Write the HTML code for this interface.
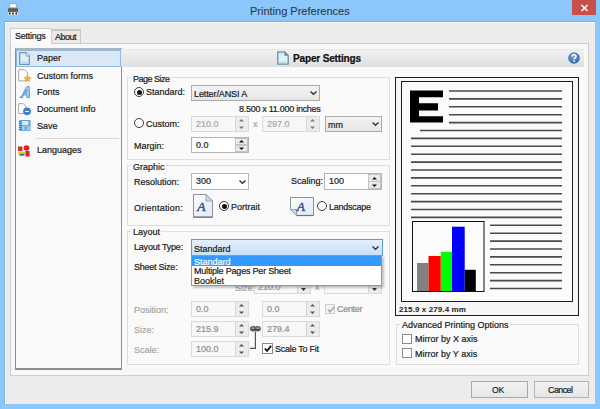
<!DOCTYPE html>
<html><head><meta charset="utf-8">
<style>
*{margin:0;padding:0;box-sizing:border-box}
html,body{width:600px;height:409px;overflow:hidden}
body{position:relative;background:#8bc7fa;font-family:"Liberation Sans",sans-serif;font-size:9px;color:#1a1a1a;-webkit-text-stroke:0.2px currentColor}
.a{position:absolute}
.t{position:absolute;white-space:nowrap;line-height:10px}
.grp{position:absolute;border:1px solid #dedede}
.lbl{position:absolute;white-space:nowrap;line-height:10px;background:#fafafa;padding:0 1px 0 2px}
.combo{position:absolute;border:1px solid #acacac;background:linear-gradient(#f3f3f3,#e6e6e6)}
.spin{position:absolute;border:1px solid #b4b4b4;background:#fff}
.spin.dis{border-color:#dadada;background:#f7f7f7}
.radio{position:absolute;width:10px;height:10px;border-radius:50%;border:1px solid #3a3a3a;background:#fff}
.radio.on::after{content:"";position:absolute;left:1.5px;top:1.5px;width:5px;height:5px;border-radius:50%;background:#111}
.chk{position:absolute;width:11px;height:11px;border:1px solid #8a8a8a;background:#fff}
.dis{color:#a6a6a6}
svg{position:absolute;overflow:visible}
.tex{background:repeating-conic-gradient(#e5e5e5 0 25%,#f3f3f3 0 50%) 0 0/2px 2px}
</style></head><body>
<!-- title bar -->
<div class="t" style="left:250px;top:5px;font-size:11px;line-height:12px;color:#2a3a4c;-webkit-text-stroke:0.1px currentColor">Printing Preferences</div>
<div class="a" style="left:572px;top:0;width:24px;height:15px;background:#c7504b"></div>
<svg style="left:581px;top:5px" width="7" height="6" viewBox="0 0 7 6"><path d="M0.5 0L6.5 6M6.5 0L0.5 6" stroke="#fff" stroke-width="1.5"/></svg>
<svg style="left:7px;top:3px" width="12" height="14" viewBox="0 0 12 14"><rect x="2.8" y="0.8" width="6.4" height="4" fill="#fff" stroke="#8a8a8a" stroke-width="0.6"/><rect x="0.5" y="4.8" width="11" height="4.6" rx="1" fill="#5b5b5b" stroke="#ddd" stroke-width="0.6"/><rect x="1.5" y="9.4" width="9" height="2.6" fill="#fff"/><rect x="2" y="9.6" width="1.6" height="1.8" fill="#111"/><rect x="5.2" y="9.6" width="1.6" height="2" fill="#111"/><rect x="8.4" y="9.6" width="1.6" height="1.8" fill="#111"/></svg>

<!-- client -->
<div class="a tex" style="left:4px;top:21px;width:591px;height:383px;border-top:1px solid #7fb3e0;border-left:1px solid #7fb3e0"></div><div class="a" style="left:5px;top:22px;width:590px;height:1px;background:#fafafa"></div><div class="a" style="left:5px;top:22px;width:1px;height:382px;background:#fafafa"></div>
<div class="a" style="left:10px;top:43px;width:579px;height:333px;background:#f8f8f8;border:1px solid #cdcdcd"></div>
<!-- tabs -->
<div class="a" style="left:10px;top:28px;width:42px;height:16px;background:#fbfbfb;border:1px solid #cdcdcd;border-bottom:none"></div>
<div class="t" style="left:15px;top:31px;letter-spacing:-0.25px">Settings</div>
<div class="a" style="left:52px;top:29px;width:29px;height:14px;background:#e9e9e9;border:1px solid #c9c9c9;border-top-width:2px;border-left:none;border-bottom:none"></div>
<div class="t" style="left:55px;top:32px;letter-spacing:-0.5px">About</div>

<!-- list -->
<div class="a" style="left:15px;top:48px;width:107px;height:322px;background:#f9f9f9;border:1px solid #8e8e8e;border-top:2px solid #b2b2b2;border-bottom-width:2px"></div>
<div class="a" style="left:16px;top:50px;width:105px;height:17px;background:#dae7f5;border:1px solid #8ab9ea"></div>
<svg style="left:19px;top:52px" width="11" height="13" viewBox="0 0 11 13"><path d="M0.7 0.7H7L10.3 4V12.3H0.7Z" fill="#ddf0fa" stroke="#6f93aa" stroke-width="1.2"/><path d="M7 0.7V4H10.3" fill="#fff" stroke="#6f93aa" stroke-width="0.8"/><path d="M2.5 10.3H8.5" stroke="#9ab" stroke-width="0.6"/></svg>
<div class="t" style="left:37px;top:53px">Paper</div>

<svg style="left:18px;top:69px" width="14" height="14" viewBox="0 0 14 14"><path d="M0.7 0.7H6.5L9.3 3.5V11.8H0.7Z" fill="#fff" stroke="#a9a9a9" stroke-width="1"/><path d="M9.5 6L10.6 8.3L13 8.6L11.2 10.2L11.7 12.6L9.5 11.4L7.3 12.6L7.8 10.2L6 8.6L8.4 8.3Z" fill="#f6b133" stroke="#e08a10" stroke-width="0.4"/></svg>
<div class="t" style="left:37px;top:71px">Custom forms</div>

<svg style="left:19px;top:86px" width="11" height="12" viewBox="0 0 11 12"><path d="M0.7 11.4Q2 11.4 2.8 10.2L7 1.8Q7.6 0.6 8.8 0.6H10.2L10.4 11.4H7.9L7.8 8.8H4.6L3.4 11.4Z M5.4 7.1H7.8L7.8 3.6Z" fill="#b4dbf8" stroke="#3a78c2" stroke-width="0.8" stroke-linejoin="round" fill-rule="evenodd"/></svg>
<div class="t" style="left:37px;top:87px">Fonts</div>

<svg style="left:18px;top:103px" width="13" height="13" viewBox="0 0 13 13"><path d="M0.7 0.7H5.5L7.5 2.7V10.5H0.7Z" fill="#fff" stroke="#a9a9a9" stroke-width="1"/><circle cx="9" cy="8.3" r="3.6" fill="#3c82cf" stroke="#2a6ab5" stroke-width="0.5"/><path d="M7.3 8.5H10.7" stroke="#fff" stroke-width="1"/></svg>
<div class="t" style="left:37px;top:104px">Document Info</div>

<svg style="left:18px;top:119px" width="13" height="13" viewBox="0 0 13 13"><rect x="1.5" y="1" width="11" height="11" fill="#5fa2da"/><path d="M0.8 2.5H2.6M0.8 4.5H2.6M0.8 6.5H2.6M0.8 8.5H2.6M0.8 10.5H2.6" stroke="#3b6fa8" stroke-width="0.9"/><rect x="4" y="2" width="6.5" height="4" fill="#d3ecfa"/><rect x="4.5" y="6.8" width="7" height="4.6" fill="#a9d8f4"/><path d="M6 7.6L9.8 10.8M9.8 7.6L6 10.8" stroke="#4a90d0" stroke-width="1"/></svg>
<div class="t" style="left:37px;top:121px">Save</div>

<div class="a" style="left:36px;top:138px;width:83px;height:1px;background:#d6d6d6"></div>
<svg style="left:18px;top:145px" width="12" height="12" viewBox="0 0 12 12"><rect x="0" y="1.5" width="4.5" height="4.5" fill="#c8392b"/><circle cx="8.5" cy="3" r="2.8" fill="#e21d1d"/><rect x="0" y="6.5" width="7" height="2.2" fill="#f2c12e"/><rect x="1.5" y="8.7" width="5" height="2" fill="#2f6db5"/><rect x="7.5" y="6" width="4" height="5.5" fill="#d9221c"/></svg>
<div class="t" style="left:37px;top:145px">Languages</div>

<!-- header -->
<div class="a" style="left:121px;top:49px;width:463px;height:18px;background:linear-gradient(#f1f1f1,#dedede);border-top:1px solid #e6e6e6"></div>
<svg style="left:277px;top:51px" width="12" height="14" viewBox="0 0 12 14"><path d="M0.8 0.8H7.6L11.2 4.4V13.2H0.8Z" fill="#dcf1fb" stroke="#6c8ea6" stroke-width="1.3" stroke-linejoin="round"/><path d="M7.6 0.8V4.4H11.2" fill="#6c8ea6" stroke="#6c8ea6" stroke-width="0.6"/><path d="M2.6 11.3H9" stroke="#a9bfcc" stroke-width="0.6"/><path d="M2.6 3H6" stroke="#a9bfcc" stroke-width="0.5"/></svg>
<div class="t" style="left:293px;top:53.5px;font-size:10px;font-weight:bold;color:#0e0e0e;letter-spacing:-0.15px">Paper Settings</div>
<svg style="left:568px;top:52px" width="12" height="12" viewBox="0 0 12 12"><defs><radialGradient id="hg" cx="0.45" cy="0.35" r="0.7"><stop offset="0" stop-color="#78a6dc"/><stop offset="1" stop-color="#2d5f9f"/></radialGradient></defs><circle cx="6" cy="6" r="5.8" fill="url(#hg)"/><path d="M4 4.6C4 2.2 8 2.2 8 4.4C8 5.8 6.2 5.9 6.2 7.3" fill="none" stroke="#fff" stroke-width="1.5"/><circle cx="6.2" cy="9.2" r="0.9" fill="#fff"/></svg>

<!-- content panel -->
<div class="a" style="left:122px;top:67px;width:462px;height:302px;background:#fafafa"></div>

<!-- Page Size group -->
<div class="grp" style="left:127px;top:77px;width:263px;height:83px"></div>
<div class="lbl" style="left:131px;top:74px;letter-spacing:-0.5px">Page Size</div>
<div class="radio on" style="left:134px;top:87px"></div>
<div class="t" style="left:146px;top:87px">Standard:</div>
<div class="combo" style="left:191px;top:85px;width:129px;height:16px"></div>
<svg style="left:310px;top:91px" width="7" height="4" viewBox="0 0 7 4"><path d="M0.5 0.5L3.5 3.3L6.5 0.5" fill="none" stroke="#333" stroke-width="1.4"/></svg>
<div class="t" style="left:194px;top:89px;letter-spacing:-0.1px">Letter/ANSI A</div>
<div class="t" style="left:239px;top:104px;letter-spacing:-0.28px">8.500 x 11.000 inches</div>

<div class="radio" style="left:134px;top:118px"></div>
<div class="t" style="left:146px;top:119px">Custom:</div>
<div class="spin dis" style="left:191px;top:116px;width:58px;height:16px"></div>
<div class="a" style="left:235px;top:117px;width:13px;height:14px;background:#ececec;border-left:1px solid #d4d4d4"></div>
<svg style="left:239px;top:119px" width="5" height="10" viewBox="0 0 5 10"><path d="M0 2.6L2.5 0L5 2.6Z M0 7.4L2.5 10L5 7.4Z" fill="#7a7a7a"/></svg>
<div class="t dis" style="left:196px;top:119px">210.0</div>
<div class="t dis" style="left:253px;top:119px">x</div>
<div class="spin dis" style="left:262px;top:116px;width:58px;height:16px"></div>
<div class="a" style="left:306px;top:117px;width:13px;height:14px;background:#ececec;border-left:1px solid #d4d4d4"></div>
<svg style="left:310px;top:119px" width="5" height="10" viewBox="0 0 5 10"><path d="M0 2.6L2.5 0L5 2.6Z M0 7.4L2.5 10L5 7.4Z" fill="#7a7a7a"/></svg>
<div class="t dis" style="left:267px;top:119px">297.0</div>
<div class="combo" style="left:325px;top:116px;width:57px;height:16px"></div>
<svg style="left:372px;top:122px" width="7" height="4" viewBox="0 0 7 4"><path d="M0.5 0.5L3.5 3.3L6.5 0.5" fill="none" stroke="#333" stroke-width="1.4"/></svg>
<div class="t" style="left:328px;top:120px">mm</div>

<div class="t" style="left:134px;top:141px">Margin:</div>
<div class="spin" style="left:191px;top:137px;width:58px;height:16px"></div>
<div class="a" style="left:235px;top:138px;width:13px;height:7px;background:#eaeaea;border:1px solid #c4c4c4"></div>
<div class="a" style="left:235px;top:145px;width:13px;height:7px;background:#eaeaea;border:1px solid #c4c4c4"></div>
<svg style="left:239px;top:140px" width="5" height="10" viewBox="0 0 5 10"><path d="M0 2.6L2.5 0L5 2.6Z M0 7.4L2.5 10L5 7.4Z" fill="#111"/></svg>
<div class="t" style="left:196px;top:140px">0.0</div>

<!-- Graphic group -->
<div class="grp" style="left:127px;top:165px;width:263px;height:61px"></div>
<div class="lbl" style="left:131px;top:162px">Graphic</div>
<div class="t" style="left:134px;top:177px">Resolution:</div>
<div class="combo" style="left:191px;top:173px;width:58px;height:17px;background:#fff;border-color:#b8b8b8"></div>
<svg style="left:239px;top:180px" width="7" height="4" viewBox="0 0 7 4"><path d="M0.5 0.5L3.5 3.3L6.5 0.5" fill="none" stroke="#333" stroke-width="1.4"/></svg>
<div class="t" style="left:196px;top:176px">300</div>
<div class="t" style="left:291px;top:176px">Scaling:</div>
<div class="spin" style="left:324px;top:173px;width:58px;height:17px"></div>
<div class="a" style="left:368px;top:174px;width:13px;height:8px;background:#eaeaea;border:1px solid #c4c4c4"></div>
<div class="a" style="left:368px;top:181px;width:13px;height:8px;background:#eaeaea;border:1px solid #c4c4c4"></div>
<svg style="left:372px;top:177px" width="5" height="10" viewBox="0 0 5 10"><path d="M0 2.6L2.5 0L5 2.6Z M0 7.4L2.5 10L5 7.4Z" fill="#111"/></svg>
<div class="t" style="left:329px;top:176px">100</div>

<div class="t" style="left:134px;top:203px;letter-spacing:0.2px">Orientation:</div>
<svg style="left:193px;top:194px" width="20" height="24" viewBox="0 0 20 24"><defs><linearGradient id="pg" x1="0" y1="0" x2="1" y2="1"><stop offset="0" stop-color="#fbfcfe"/><stop offset="1" stop-color="#dfe8f5"/></linearGradient></defs><path d="M0.5 0.5H13L19.5 7V23.5H0.5Z" fill="url(#pg)" stroke="#8d929c" stroke-width="1"/><path d="M0.5 23H19.5" stroke="#6d7480" stroke-width="1.2"/><path d="M13 0.5V7H19.5Z" fill="#c9daf0" stroke="#8d929c" stroke-width="0.8"/><text x="4.2" y="17" font-family="Liberation Serif" font-style="italic" font-size="13.5" fill="#34538a" stroke="#34538a" stroke-width="0.5" style="-webkit-text-stroke:0">A</text></svg>
<div class="radio on" style="left:219px;top:201px"></div>
<div class="t" style="left:231px;top:202px">Portrait</div>
<svg style="left:290px;top:197px" width="24" height="20" viewBox="0 0 24 20"><path d="M0.5 0.5H23.5V18.5H6.5L0.5 12.5Z" fill="url(#pg)" stroke="#8d929c" stroke-width="1"/><path d="M6.5 18.5H23.5" stroke="#6d7480" stroke-width="1.2"/><path d="M0.5 12.5H6.5V18.5Z" fill="#c9daf0" stroke="#8d929c" stroke-width="0.8"/><text x="6.8" y="13.8" font-family="Liberation Serif" font-style="italic" font-size="13.5" fill="#34538a" stroke="#34538a" stroke-width="0.5" style="-webkit-text-stroke:0">A</text></svg>
<div class="radio" style="left:317px;top:201px"></div>
<div class="t" style="left:329px;top:201.5px;letter-spacing:-0.25px">Landscape</div>

<!-- Layout group -->
<div class="grp" style="left:127px;top:231px;width:263px;height:134px"></div>
<div class="lbl" style="left:131px;top:227px">Layout</div>
<div class="t" style="left:134px;top:242px;letter-spacing:-0.2px">Layout Type:</div>
<div class="t" style="left:134px;top:262px;letter-spacing:-0.24px">Sheet Size:</div>
<!-- partially hidden sheet size row -->
<div class="t dis" style="left:235px;top:283px;color:#a0a0a0">Size:</div>
<div class="spin dis" style="left:254px;top:279px;width:57px;height:15px"></div>
<div class="a" style="left:297px;top:280px;width:13px;height:13px;background:#ececec;border-left:1px solid #d4d4d4"></div>
<svg style="left:301px;top:288px" width="5" height="3" viewBox="0 0 5 3"><path d="M0 0L2.5 3L5 0Z" fill="#333"/></svg>
<div class="t dis" style="left:258px;top:282px;color:#9a9a9a">210.0</div>
<div class="t dis" style="left:315px;top:282px">x</div><div class="t dis" style="left:329px;top:282px;color:#9a9a9a">297.0</div>
<div class="spin dis" style="left:324px;top:279px;width:58px;height:15px"></div>
<div class="a" style="left:368px;top:280px;width:13px;height:13px;background:#ececec;border-left:1px solid #d4d4d4"></div>
<svg style="left:372px;top:288px" width="5" height="3" viewBox="0 0 5 3"><path d="M0 0L2.5 3L5 0Z" fill="#333"/></svg>

<div class="t dis" style="left:134px;top:305px">Position:</div>
<div class="t dis" style="left:134px;top:325px">Size:</div>
<div class="t dis" style="left:134px;top:344.5px">Scale:</div>

<div class="spin dis" style="left:191px;top:301px;width:58px;height:16px"></div>
<div class="a" style="left:235px;top:302px;width:13px;height:14px;background:#ececec;border-left:1px solid #d4d4d4"></div>
<svg style="left:239px;top:304px" width="5" height="10" viewBox="0 0 5 10"><path d="M0 2.6L2.5 0L5 2.6Z M0 7.4L2.5 10L5 7.4Z" fill="#555"/></svg>
<div class="t dis" style="left:196px;top:304px;color:#8f8f8f">0.0</div>
<div class="spin dis" style="left:191px;top:321px;width:58px;height:16px"></div>
<div class="a" style="left:235px;top:322px;width:13px;height:14px;background:#ececec;border-left:1px solid #d4d4d4"></div>
<svg style="left:239px;top:324px" width="5" height="10" viewBox="0 0 5 10"><path d="M0 2.6L2.5 0L5 2.6Z M0 7.4L2.5 10L5 7.4Z" fill="#555"/></svg>
<div class="t dis" style="left:196px;top:324px;color:#8f8f8f">215.9</div>
<div class="spin dis" style="left:191px;top:341px;width:58px;height:16px"></div>
<div class="a" style="left:235px;top:342px;width:13px;height:14px;background:#ececec;border-left:1px solid #d4d4d4"></div>
<svg style="left:239px;top:344px" width="5" height="10" viewBox="0 0 5 10"><path d="M0 2.6L2.5 0L5 2.6Z M0 7.4L2.5 10L5 7.4Z" fill="#555"/></svg>
<div class="t dis" style="left:196px;top:344px;color:#8f8f8f">100.0</div>

<div class="spin dis" style="left:262px;top:301px;width:58px;height:16px"></div>
<div class="a" style="left:306px;top:302px;width:13px;height:14px;background:#ececec;border-left:1px solid #d4d4d4"></div>
<svg style="left:310px;top:304px" width="5" height="10" viewBox="0 0 5 10"><path d="M0 2.6L2.5 0L5 2.6Z M0 7.4L2.5 10L5 7.4Z" fill="#555"/></svg>
<div class="t dis" style="left:267px;top:304px;color:#8f8f8f">0.0</div>
<div class="spin dis" style="left:262px;top:321px;width:58px;height:16px"></div>
<div class="a" style="left:306px;top:322px;width:13px;height:14px;background:#ececec;border-left:1px solid #d4d4d4"></div>
<svg style="left:310px;top:324px" width="5" height="10" viewBox="0 0 5 10"><path d="M0 2.6L2.5 0L5 2.6Z M0 7.4L2.5 10L5 7.4Z" fill="#555"/></svg>
<div class="t dis" style="left:267px;top:324px;color:#8f8f8f">279.4</div>

<div class="chk" style="left:325px;top:304px;width:10px;height:10px;border-color:#cfcfcf;background:#f3f3f3"></div>
<svg style="left:327px;top:306px" width="8" height="7" viewBox="0 0 8 7"><path d="M0.8 3.5L3 5.8L7.2 0.8" fill="none" stroke="#a9a9a9" stroke-width="1.6"/></svg>
<div class="t dis" style="left:337px;top:304px;letter-spacing:-0.3px;color:#8c8c8c">Center</div>

<svg style="left:249px;top:325px" width="13" height="25" viewBox="0 0 13 25"><ellipse cx="4.2" cy="3.8" rx="3.3" ry="2.7" fill="#5e5e5e"/><ellipse cx="8.6" cy="3.8" rx="3.3" ry="2.7" fill="#5e5e5e"/><ellipse cx="4" cy="3.3" rx="1.5" ry="0.8" fill="#c8c8c8"/><ellipse cx="8.8" cy="3.3" rx="1.5" ry="0.8" fill="#c8c8c8"/><path d="M2.5 4.4H10.3" stroke="#3a3a3a" stroke-width="0.9"/><path d="M6.4 6.4V23.4H1" fill="none" stroke="#555" stroke-width="1.2"/></svg>

<div class="chk" style="left:262px;top:343px"></div>
<svg style="left:264px;top:345px" width="8" height="7" viewBox="0 0 8 7"><path d="M0.8 3.5L3 5.8L7.2 0.8" fill="none" stroke="#111" stroke-width="1.8"/></svg>
<div class="t" style="left:275px;top:344px;letter-spacing:-0.27px">Scale To Fit</div>

<!-- Layout Type combo + dropdown -->
<div class="combo" style="left:191px;top:239px;width:192px;height:17px;border-color:#5b9de3;background:linear-gradient(#e3effc,#c8e0f9)"></div>
<svg style="left:372px;top:246px" width="7" height="4" viewBox="0 0 7 4"><path d="M0.5 0.5L3.5 3.3L6.5 0.5" fill="none" stroke="#333" stroke-width="1.4"/></svg>
<div class="t" style="left:194px;top:243.5px">Standard</div>
<div class="a" style="left:191px;top:255px;width:191px;height:31px;background:#fff;border:1px solid #6f9fd8;box-shadow:2px 2px 2px rgba(0,0,0,.22)"></div>
<div class="a" style="left:192px;top:256px;width:189px;height:10px;background:#3499fd"></div>
<div class="t" style="left:194px;top:257px;color:#fff">Standard</div>
<div class="t" style="left:194px;top:266px;letter-spacing:-0.2px">Multiple Pages Per Sheet</div>
<div class="t" style="left:194px;top:276px">Booklet</div>

<!-- preview -->
<div class="a" style="left:395px;top:77px;width:184px;height:239px;border:1px solid #1e1e1e;background:#f6f6f6"></div>
<div class="a" style="left:401px;top:81px;width:172px;height:221px;border:1px solid #1e1e1e;background:#fbfbfb"></div>
<svg style="left:0;top:0" width="600" height="409" viewBox="0 0 600 409">
<path d="M410 90.5H443V97.2H419V103.2H438V110.4H419V116.2H443V122.6H410Z" fill="#000"/>
<g stroke="#4a4a4a" stroke-width="1.6">
<line x1="449" y1="91.0" x2="562" y2="91.0"/>
<line x1="449" y1="98.9" x2="562" y2="98.9"/>
<line x1="449" y1="106.8" x2="562" y2="106.8"/>
<line x1="449" y1="114.7" x2="562" y2="114.7"/>
<line x1="449" y1="122.6" x2="562" y2="122.6"/>
<line x1="420" y1="130.5" x2="562" y2="130.5"/>
<line x1="411" y1="138.4" x2="562" y2="138.4"/>
<line x1="411" y1="146.3" x2="562" y2="146.3"/>
<line x1="411" y1="154.2" x2="562" y2="154.2"/>
<line x1="411" y1="162.1" x2="562" y2="162.1"/>
<line x1="411" y1="170.0" x2="562" y2="170.0"/>
<line x1="411" y1="177.9" x2="562" y2="177.9"/>
<line x1="411" y1="185.8" x2="562" y2="185.8"/>
<line x1="411" y1="193.7" x2="562" y2="193.7"/>
<line x1="411" y1="201.6" x2="562" y2="201.6"/>
<line x1="411" y1="209.5" x2="562" y2="209.5"/>
<line x1="411" y1="217.4" x2="562" y2="217.4"/>
<line x1="490" y1="225.3" x2="562" y2="225.3"/>
<line x1="490" y1="233.2" x2="562" y2="233.2"/>
<line x1="490" y1="241.1" x2="562" y2="241.1"/>
<line x1="490" y1="249.0" x2="562" y2="249.0"/>
<line x1="490" y1="256.9" x2="562" y2="256.9"/>
<line x1="490" y1="264.8" x2="562" y2="264.8"/>
<line x1="490" y1="272.7" x2="562" y2="272.7"/>
<line x1="490" y1="280.6" x2="562" y2="280.6"/>
<line x1="490" y1="288.5" x2="562" y2="288.5"/>
</g>
<rect x="412.5" y="221.5" width="71.5" height="70" fill="#fcfcfc" stroke="#111" stroke-width="1"/>
<rect x="417" y="263" width="11.5" height="28" fill="#808080"/>
<rect x="428.5" y="256" width="12.3" height="35" fill="#ff0000"/>
<rect x="440.8" y="251.8" width="11.2" height="39.2" fill="#00ff00"/>
<rect x="452" y="226.7" width="12.7" height="64.3" fill="#0000ff"/>
<rect x="464.7" y="269.8" width="11.1" height="21.2" fill="#000"/>
</svg>
<div class="t" style="left:399px;top:304.5px;font-weight:bold;font-size:8px;color:#222;-webkit-text-stroke:0;letter-spacing:0.1px">215.9 x 279.4 mm</div>

<!-- Advanced -->
<div class="grp" style="left:396px;top:324px;width:183px;height:41px"></div>
<div class="lbl" style="left:400px;top:319.5px">Advanced Printing Options</div>
<div class="chk" style="left:402px;top:334px;width:10px;height:10px"></div>
<div class="t" style="left:415px;top:334px">Mirror by X axis</div>
<div class="chk" style="left:402px;top:348px;width:10px;height:10px"></div>
<div class="t" style="left:415px;top:349px">Mirror by Y axis</div>

<!-- buttons -->
<div class="a" style="left:471px;top:381px;width:57px;height:17px;background:linear-gradient(#f2f2f2,#e6e6e6);border:1px solid #7db3e8"></div>
<div class="t" style="left:492px;top:385px;font-size:8.5px">OK</div>
<div class="a" style="left:534px;top:381px;width:55px;height:17px;background:linear-gradient(#f2f2f2,#e6e6e6);border:1px solid #b3b3b3"></div>
<div class="t" style="left:548px;top:385px;letter-spacing:-0.6px">Cancel</div>
</body></html>
